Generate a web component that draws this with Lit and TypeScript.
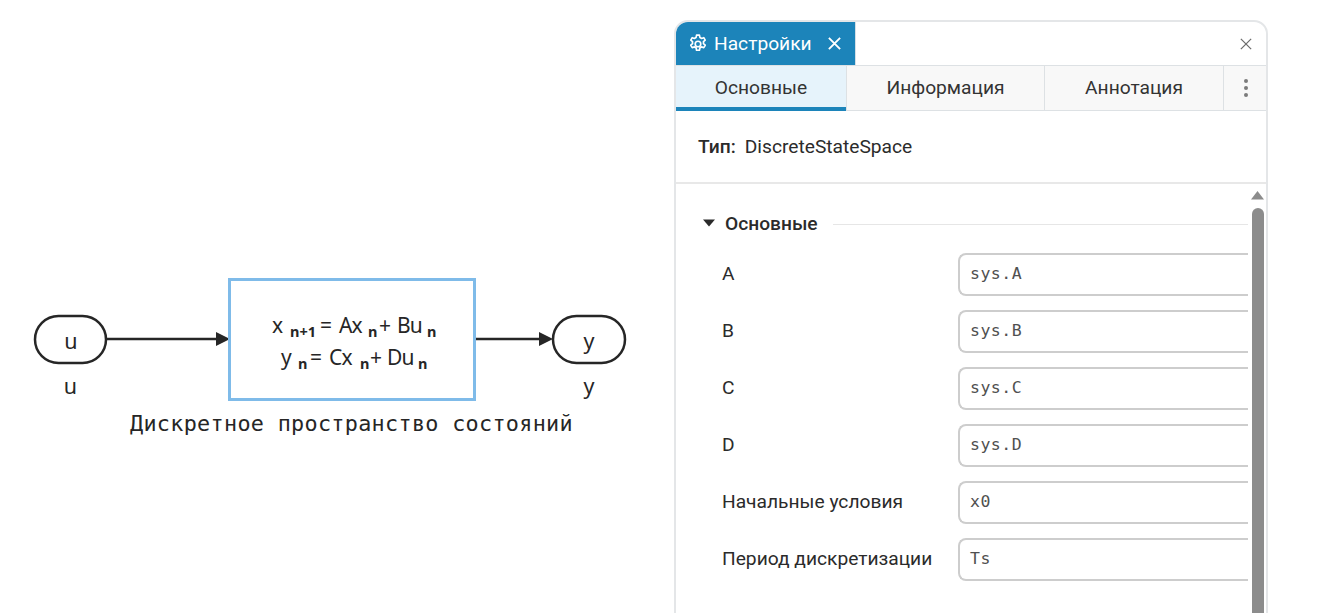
import { LitElement, html, css, svg } from "lit";
import { customElement } from "lit/decorators.js";

const rows = [
  ["A", "sys.A"],
  ["B", "sys.B"],
  ["C", "sys.C"],
  ["D", "sys.D"],
  ["Начальные условия", "x0"],
  ["Период дискретизации", "Ts"],
];

// eq pieces: [text, x, baseline, is subscript]
const eq: [string, number, number, boolean][] = [
  ["x", 272, 333, false],
  ["n+1", 290, 337, true],
  ["=", 320, 333, false],
  ["Ax", 339, 333, false],
  ["n", 368, 337, true],
  ["+", 379, 333, false],
  ["Bu", 397, 333, false],
  ["n", 427, 337, true],
  ["y", 281, 365, false],
  ["n", 298, 369, true],
  ["=", 310, 365, false],
  ["Cx", 329, 365, false],
  ["n", 360, 369, true],
  ["+", 370, 365, false],
  ["Du", 387, 365, false],
  ["n", 418, 369, true],
];

const gear = svg`<path d="M7.7 1h2.600l.4 2.100a6 6 0 0 1 1.500.9l2-.7 1.300 2.200-1.600 1.400a6 6 0 0 1 0 1.800l1.600 1.400-1.300 2.200-2-.7a6 6 0 0 1-1.500.9l-.4 2.100H7.700l-.4-2.100a6 6 0 0 1-1.500-.9l-2 .7-1.300-2.200 1.600-1.400a6 6 0 0 1 0-1.800L2.500 5.500l1.300-2.200 2 .7a6 6 0 0 1 1.500-.9z" stroke-linejoin="round"/><circle cx="9" cy="9" r="2.500"/>`;

@customElement("app-root")
export class AppRoot extends LitElement {
  static styles = css`
    :host {
      display: block;
      position: relative;
      height: 613px;
      overflow: hidden;
      background: #fff;
      font-family: Roboto, sans-serif;
      color: #2b2b2b;
    }
    .page {
      display: flex;
      height: 613px;
      padding: 20px 62px 0 0;
      box-sizing: border-box;
    }
    .canvas {
      position: relative;
      flex: none;
      width: 674px;
      margin-top: -20px;
      height: 613px;
    }
    .canvas svg {
      display: block;
    }
    .mono {
      font-family: "DejaVu Sans Mono", monospace;
      font-size: 21.8px;
      letter-spacing: 0.3px;
      fill: #262626;
    }
    .eq {
      font-family: "Noto Sans", sans-serif;
      font-size: 21px;
      letter-spacing: -0.8px;
      fill: #262626;
    }
    .eq.sub {
      font-size: 14.5px;
      font-weight: 700;
      letter-spacing: 0;
    }
    .port {
      font-family: "Noto Sans", sans-serif;
      font-size: 21.5px;
      fill: #262626;
      text-anchor: middle;
    }
    .panel {
      flex: 1;
      height: 640px;
      box-sizing: border-box;
      border: 2px solid #e4e6e8;
      border-radius: 14px 14px 0 0;
      overflow: hidden;
      display: flex;
      flex-direction: column;
    }
    .head {
      display: flex;
      justify-content: space-between;
      align-items: stretch;
      height: 43px;
      flex: none;
      border-bottom: 1px solid #dde1e4;
      box-sizing: content-box;
    }
    .head-tab {
      width: 180px;
      background: #1c84ba;
      color: #fff;
      display: flex;
      align-items: center;
      padding-left: 12px;
      box-sizing: border-box;
      font-size: 19.2px;
      border-right: 1px solid #d5dfe6;
    }
    .head-tab .gear {
      width: 20px;
      height: 20px;
      margin-right: 6px;
      fill: none;
      stroke: #fff;
      stroke-width: 1.5;
    }
    .head-tab .x {
      width: 15px;
      height: 15px;
      margin-left: 15px;
      stroke: #fff;
      stroke-width: 2;
    }
    .close {
      width: 12px;
      height: 12px;
      stroke: #6f6f6f;
      stroke-width: 1.5;
      align-self: center;
      margin-right: 14px;
    }
    .tabs {
      display: flex;
      height: 44px;
      flex: none;
      background: #f8f8f8;
      border-bottom: 1px solid #dde1e4;
      box-sizing: content-box;
      font-size: 19.2px;
    }
    .tab {
      display: flex;
      align-items: center;
      justify-content: center;
      border-right: 1px solid #dde1e4;
      box-sizing: border-box;
      color: #333;
      padding-bottom: 2px;
    }
    .tab.active {
      background: #e6f3fb;
      box-shadow: inset 0 -4px 0 #1c84ba;
      height: 45px;
      margin-bottom: -1px;
      padding-bottom: 3px;
    }
    .more {
      flex: 1;
      display: flex;
      align-items: center;
      justify-content: center;
      padding-left: 1px;
    }
    .more svg {
      width: 6px;
      height: 20px;
      fill: #7b7b7b;
    }
    .type {
      flex: none;
      height: 71px;
      display: flex;
      align-items: center;
      padding-left: 22px;
      border-bottom: 2px solid #e8e8e8;
      font-size: 19.2px;
      gap: 9px;
    }
    .type b {
      font-weight: 500;
    }
    .body {
      position: relative;
      flex: 1;
    }
    .section {
      display: flex;
      align-items: center;
      height: 26px;
      margin: 26px 18px 0 27px;
      font-size: 19.2px;
      font-weight: 500;
    }
    .section svg {
      width: 12px;
      height: 8px;
      fill: #2b2b2b;
      margin-right: 10px;
    }
    .section i {
      flex: 1;
      height: 1px;
      margin: 2px 0 0 15px;
      background: #e6e6e6;
    }
    .rows {
      display: flex;
      flex-direction: column;
      gap: 14px;
      margin: 17px 18px 0 46px;
    }
    .row {
      display: flex;
      align-items: center;
      height: 43px;
      font-size: 19.2px;
    }
    .row label {
      width: 236px;
      flex: none;
      padding-bottom: 2px;
      box-sizing: border-box;
    }
    .field {
      flex: 1;
      height: 43px;
      box-sizing: border-box;
      border: 2px solid #cdcdcd;
      border-right: none;
      border-radius: 8px 0 0 8px;
      display: flex;
      align-items: center;
      padding-left: 10px;
      font-family: "DejaVu Sans Mono", monospace;
      font-size: 16.5px;
      letter-spacing: 0.5px;
      color: #505050;
      padding-bottom: 3px;
    }
    .scroll {
      position: absolute;
      top: 7px;
      right: 2px;
      width: 13px;
      bottom: 0;
      display: flex;
      flex-direction: column;
      align-items: center;
      gap: 8px;
    }
    .scroll svg {
      width: 13px;
      height: 9px;
      fill: #8c8c8c;
      flex: none;
    }
    .thumb {
      flex: 1;
      width: 12px;
      background: #8c8c8c;
      border-radius: 6px 6px 0 0;
    }
  `;

  private diagram() {
    return svg`
      <line x1="107" y1="339" x2="220" y2="339" stroke="#262626" stroke-width="2.500"/>
      <path d="M216 332L230 339 216 346z" fill="#262626"/>
      <line x1="475" y1="339" x2="544" y2="339" stroke="#262626" stroke-width="2.500"/>
      <path d="M539 332L553 339 539 346z" fill="#262626"/>
      <rect x="35" y="316" width="71" height="47" rx="23.500" fill="#fff" stroke="#262626" stroke-width="2.500"/>
      <rect x="553" y="316" width="72" height="47" rx="23.500" fill="#fff" stroke="#262626" stroke-width="2.500"/>
      <rect x="229.500" y="279.500" width="245" height="120" fill="#fff" stroke="#7fbbe9" stroke-width="3"/>
      <text class="port" x="71" y="349">u</text>
      <text class="port" x="589" y="349">y</text>
      <text class="port" x="70.500" y="394">u</text>
      <text class="port" x="589" y="394">y</text>
      ${eq.map(
        ([t, x, y, sub]) =>
          svg`<text class=${sub ? "eq sub" : "eq"} x=${x} y=${y}>${t}</text>`,
      )}
      <text class="mono" x="130" y="431">Дискретное пространство состояний</text>
    `;
  }

  render() {
    return html`
      <div class="page">
        <div class="canvas">
          <svg width="674" height="613" viewBox="0 0 674 613">${this.diagram()}</svg>
        </div>
        <section class="panel">
          <div class="head">
            <div class="head-tab">
              <svg class="gear" viewBox="0 0 18 18">${gear}</svg>
              Настройки
              <svg class="x" viewBox="0 0 16 16"><path d="M2 2l12 12M14 2L2 14" /></svg>
            </div>
            <svg class="close" viewBox="0 0 14 14"><path d="M1 1l12 12M13 1L1 13" /></svg>
          </div>
          <div class="tabs">
            <div class="tab active" style="width:171px">Основные</div>
            <div class="tab" style="width:198px">Информация</div>
            <div class="tab" style="width:179px">Аннотация</div>
            <div class="more">
              <svg viewBox="0 0 6 20"><circle cx="3" cy="3" r="2" /><circle cx="3" cy="10" r="2" /><circle cx="3" cy="17" r="2" /></svg>
            </div>
          </div>
          <div class="type"><b>Тип:</b><span>DiscreteStateSpace</span></div>
          <div class="body">
            <div class="section">
              <svg viewBox="0 0 12 8"><path d="M0 .5h12L6 7.500z" /></svg>
              Основные
              <i></i>
            </div>
            <div class="rows">
              ${rows.map(
                ([name, value]) => html`
                  <div class="row">
                    <label>${name}</label>
                    <div class="field">${value}</div>
                  </div>
                `,
              )}
            </div>
            <div class="scroll">
              <svg viewBox="0 0 13 9"><path d="M6.500 0L13 8.500H0z" /></svg>
              <div class="thumb"></div>
            </div>
          </div>
        </section>
      </div>
    `;
  }
}
